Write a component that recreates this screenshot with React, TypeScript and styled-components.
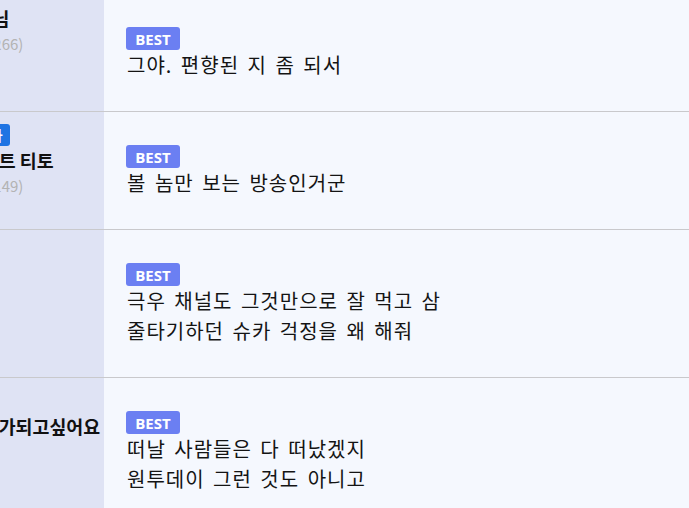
import React from "react";
import styled, { createGlobalStyle } from "styled-components";

const GlobalStyle = createGlobalStyle`
  html, body {
    margin: 0;
    padding: 0;
    background: #f5f8fe;
    overflow: hidden;
  }
  * { box-sizing: border-box; }
`;

const Viewport = styled.div`
  width: 689px;
  height: 508px;
  overflow: hidden;
  background: #f5f8fe;
  font-family: "Noto Sans CJK KR", "Noto Sans", sans-serif;
`;

const Table = styled.div`
  display: flex;
  flex-direction: column;
  margin-top: -6px;
  margin-left: -85px;
  width: 774px;
`;

const Row = styled.div`
  display: grid;
  grid-template-columns: 189px 1fr;
  border-bottom: 1px solid #c9c9cc;
`;

const UserCell = styled.div`
  background: #dfe3f4;
  padding: 12px 0 0 16px;
  display: flex;
  flex-direction: column;
  align-items: flex-start;
  white-space: nowrap;
`;

const UserBadge = styled.span<{ $padLeft?: number }>`
  display: inline-flex;
  align-items: center;
  height: 22px;
  padding: 0 7px 0 ${(p) => p.$padLeft ?? 7}px;
  border-radius: 3px;
  background: #1f74e3;
  color: #fff;
  font-size: 14px;
  font-weight: 700;
  margin-bottom: 2px;
`;

const UserName = styled.div`
  font-size: 18.4px;
  line-height: 24px;
  font-weight: 700;
  color: #111;
`;

const UserCount = styled.div`
  font-size: 15px;
  line-height: 26px;
  color: #b3b3b3;
  margin-top: 1px;
`;

const CommentCell = styled.div`
  padding: 33px 16px 31px 22px;
  display: flex;
  flex-direction: column;
  align-items: flex-start;
`;

const BestBadge = styled.span`
  display: inline-flex;
  align-items: center;
  justify-content: center;
  width: 54px;
  height: 23px;
  border-radius: 3px;
  background: #6b7ff2;
  color: #fff;
  font-family: "Open Sans", "Noto Sans", sans-serif;
  font-size: 15px;
  font-weight: 700;
`;

const CommentText = styled.div`
  font-size: 20px;
  line-height: 30px;
  letter-spacing: 1px;
  word-spacing: 3px;
  color: #141414;
  padding-left: 1px;
`;

type Item = {
  badge?: string;
  badgePad?: number;
  name: string;
  count: string;
  lines: string[];
};

const items: Item[] = [
  {
    name: "하늘1곰님",
    count: "댓글수 (1,266)",
    lines: ["그야. 편향된 지 좀 되서"],
  },
  {
    badge: "열혈 매니아",
    badgePad: 4,
    name: "아이스민트 티토",
    count: "댓글수 (1,149)",
    lines: ["볼 놈만 보는 방송인거군"],
  },
  {
    name: "곰돌",
    count: "(5)",
    lines: ["극우 채널도 그것만으로 잘 먹고 삼", "줄타기하던 슈카 걱정을 왜 해줘"],
  },
  {
    badge: "VIP",
    name: "나도부자가되고싶어요",
    count: "(3)",
    lines: ["떠날 사람들은 다 떠났겠지", "원투데이 그런 것도 아니고"],
  },
];

export default function App() {
  return (
    <>
      <GlobalStyle />
      <Viewport>
        <Table>
          {items.map((it, i) => (
            <Row key={i}>
              <UserCell>
                {it.badge && <UserBadge $padLeft={it.badgePad}>{it.badge}</UserBadge>}
                <UserName>{it.name}</UserName>
                <UserCount>{it.count}</UserCount>
              </UserCell>
              <CommentCell>
                <BestBadge>BEST</BestBadge>
                {it.lines.map((l, j) => (
                  <CommentText key={j}>{l}</CommentText>
                ))}
              </CommentCell>
            </Row>
          ))}
        </Table>
      </Viewport>
    </>
  );
}
